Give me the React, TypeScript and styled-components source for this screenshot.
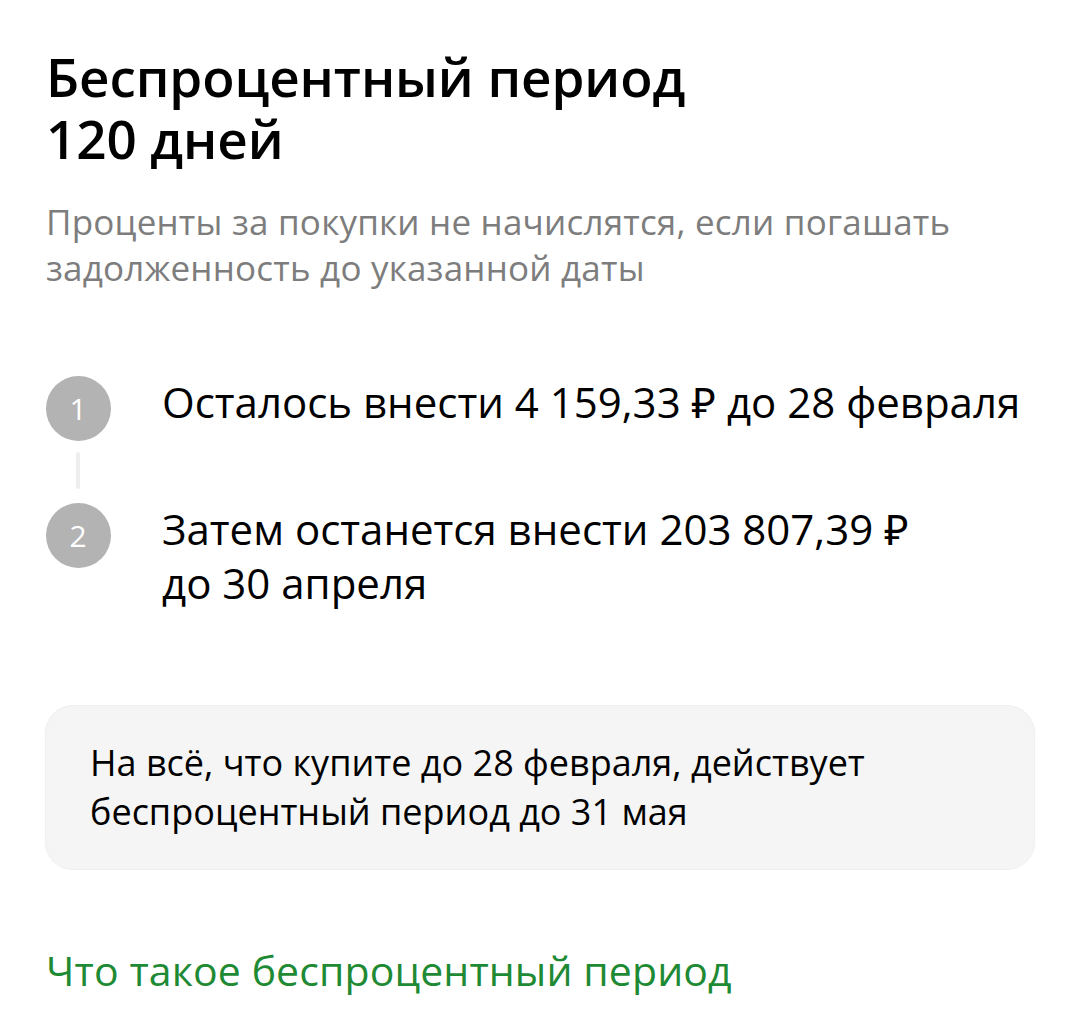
import React from "react";
import styled, { createGlobalStyle } from "styled-components";

const Global = createGlobalStyle`
  html, body { margin: 0; padding: 0; background: #ffffff; }
  body { font-family: "Open Sans", "Noto Sans", sans-serif; color: #000; }
`;

const Page = styled.div`
  width: 1080px;
  padding: 46px 45px 0 46px;
  box-sizing: border-box;
  display: flex;
  flex-direction: column;
`;

const Title = styled.h1`
  margin: 0;
  font-size: 53px;
  line-height: 62px;
  font-weight: 600;
  letter-spacing: -0.1px;
`;

const Subtitle = styled.p`
  margin: 29px 0 0;
  font-size: 35px;
  line-height: 46px;
  letter-spacing: 0.2px;
  color: #7d7d7d;
`;

const Steps = styled.div`
  margin-top: 84px;
  display: flex;
  flex-direction: column;
`;

const Step = styled.div`
  display: grid;
  grid-template-columns: 64px 1fr;
  column-gap: 52px;
  align-items: stretch;
`;

const Rail = styled.div`
  display: flex;
  flex-direction: column;
  align-items: center;
`;

const Circle = styled.div`
  width: 65px;
  height: 65px;
  margin-top: 1px;
  flex-shrink: 0;
  border-radius: 50%;
  background: #b3b3b3;
  color: #fff;
  display: flex;
  align-items: center;
  justify-content: center;
  font-size: 30px;
  font-weight: 500;
`;

const Connector = styled.div`
  width: 4px;
  flex: 1;
  margin: 11px 0 13px;
  background: #eeeeee;
  border-radius: 2px;
`;

const StepText = styled.div<{ $last?: boolean }>`
  font-size: 42px;
  line-height: 54px;
  padding-bottom: ${(p) => (p.$last ? "0" : "73px")};
`;

const Card = styled.div`
  margin-top: 95px;
  background: #f5f5f5;
  border: 1px solid #efefef;
  border-radius: 28px;
  padding: 32px 44px 33px;
  font-size: 36px;
  line-height: 49px;
  width: 990px;
  box-sizing: border-box;
  margin-left: -1px;
`;

const Link = styled.a`
  margin-top: 75px;
  font-size: 41px;
  line-height: 50px;
  letter-spacing: 0.1px;
  color: #1f8a34;
  text-decoration: none;
`;

export default function App() {
  return (
    <>
      <Global />
      <Page>
        <Title>
          Беспроцентный период
          <br />
          120 дней
        </Title>
        <Subtitle>
          Проценты за покупки не начислятся, если погашать
          <br />
          задолженность до указанной даты
        </Subtitle>
        <Steps>
          <Step>
            <Rail>
              <Circle>1</Circle>
              <Connector />
            </Rail>
            <StepText>Осталось внести 4 159,33 ₽ до 28 февраля</StepText>
          </Step>
          <Step>
            <Rail>
              <Circle>2</Circle>
            </Rail>
            <StepText $last>
              Затем останется внести 203 807,39 ₽
              <br />
              до 30 апреля
            </StepText>
          </Step>
        </Steps>
        <Card>
          На всё, что купите до 28 февраля, действует
          <br />
          беспроцентный период до 31 мая
        </Card>
        <Link href="#">Что такое беспроцентный период</Link>
      </Page>
    </>
  );
}
